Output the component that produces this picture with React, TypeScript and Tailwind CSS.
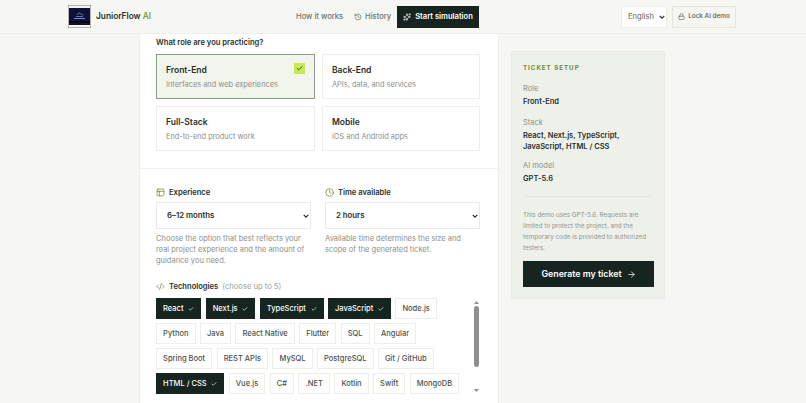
import React from 'react';
import { ArrowRight, Check, Clock, CodeXml, History, Lock, PanelsTopLeft, Sparkles } from 'lucide-react';

const roles = [
  { name: 'Front-End', desc: 'Interfaces and web experiences', selected: true },
  { name: 'Back-End', desc: 'APIs, data, and services' },
  { name: 'Full-Stack', desc: 'End-to-end product work' },
  { name: 'Mobile', desc: 'iOS and Android apps' },
];

const techRows = [
  [['React', 1], ['Next.js', 1], ['TypeScript', 1], ['JavaScript', 1], ['Node.js', 0]],
  [['Python', 0], ['Java', 0], ['React Native', 0], ['Flutter', 0], ['SQL', 0], ['Angular', 0]],
  [['Spring Boot', 0], ['REST APIs', 0], ['MySQL', 0], ['PostgreSQL', 0], ['Git / GitHub', 0]],
  [['HTML / CSS', 1], ['Vue.js', 0], ['C#', 0], ['.NET', 0], ['Kotlin', 0], ['Swift', 0], ['MongoDB', 0]],
] as [string, number][][];

const Logo = () => (
  <svg width="23" height="23" viewBox="0 0 23 23" className="shrink-0">
    <rect x="0.25" y="0.25" width="22.5" height="22.5" fill="#f4f4f0" stroke="#77796f" strokeWidth="0.5" />
    <rect x="1" y="3" width="21" height="17" fill="#0d1238" />
    <rect x="1" y="16" width="21" height="2" fill="#05070f" />
    <path d="M8 11.5h7M9 10c.5-2 3-2.5 4-1 1 0 2 .5 2 1.5" fill="none" stroke="#6f8de0" strokeWidth="0.8" />
    <rect x="6" y="13" width="11" height="1" fill="#8d7fe0" />
  </svg>
);

const Field = ({ label, className, children }: { label: string; className: string; children: React.ReactNode }) => (
  <div className={className}>
    <p className="text-[7.5px] leading-[13px] text-[#8b9189]">{label}</p>
    <div className="mt-[1px] text-[7.5px] leading-[11px] font-semibold text-[#27302b]">{children}</div>
  </div>
);

// native select with the arrow drawn by hand, the browser's one is too big at this size
const SelectBox = ({ value, className }: { value: string; className: string }) => (
  <div className="relative">
    <select className={`block w-full appearance-none border bg-white ${className}`}>
      <option>{value}</option>
    </select>
    <svg
      className="pointer-events-none absolute right-[2px] top-1/2 -translate-y-1/2"
      width="6"
      height="4"
      viewBox="0 0 6 4"
    >
      <path d="M.7.8 3 3.1 5.3.8" fill="none" stroke="#27302b" strokeWidth="1.2" />
    </svg>
  </div>
);

export default function App() {
  return (
    <div className="h-[403px] w-[806px] overflow-hidden bg-[#f6f7f2] font-['Inter',sans-serif] text-[#27302b]">
      <header className="flex h-[34px] items-center border-b border-[#edefe8] bg-[#f6f7f2] pl-[68px]">
        <Logo />
        <span className="ml-[5px] w-[54px] text-[8.3px] font-semibold whitespace-nowrap text-[#27302b]">
          JuniorFlow <span className="text-[#7f9a3c]">AI</span>
        </span>
        <span className="ml-[146px] w-[46px] text-[7.6px] font-medium whitespace-nowrap text-[#6d736c]">How it works</span>
        <History className="ml-[12px] size-[8px] text-[#6d736c]" />
        <span className="ml-[3px] w-[26px] text-[7.6px] font-medium text-[#6d736c]">History</span>
        <button className="ml-[6px] flex h-[22px] w-[82px] items-center justify-center gap-[4px] bg-[#16251f] text-[7.6px] font-semibold text-white">
          <Sparkles className="size-[8px]" />
          Start simulation
        </button>
        <div className="ml-[142px] w-[46px]">
          <SelectBox value="English" className="h-[22px] border-[#ecefe7] pl-[6px] text-[7.6px] text-[#5f665f]" />
        </div>
        <button className="ml-[5px] flex h-[22px] w-[64px] items-center justify-center gap-[3px] border border-[#e2e5dc] text-[6.4px] font-medium text-[#555c55]">
          <Lock className="size-[7px]" />
          Lock AI demo
        </button>
      </header>

      <main className="flex items-start pl-[139px]">
        <section className="h-[369px] w-[360px] shrink-0 border-x border-[#eceee7] bg-white">
          <div className="border-b border-[#eff1ea] px-[16px] pb-[17px] pt-[3px]">
            <h2 className="text-[7.6px] leading-[11px] font-semibold text-[#27302b]">What role are you practicing?</h2>
            <div className="mt-[6px] grid grid-cols-[159px_158px] gap-x-[7px] gap-y-[7px]">
              {roles.map(role => (
                <div
                  key={role.name}
                  className={`relative h-[45px] border px-[9px] pt-[9px] ${
                    role.selected ? 'border-[#8f9a8f] bg-[#f2f5ec]' : 'border-[#eceee7] bg-white'
                  }`}
                >
                  <p className="text-[8.5px] leading-[13px] font-semibold text-[#27302b]">{role.name}</p>
                  <p className="mt-[2px] text-[7.4px] leading-[11px] text-[#8a908a]">{role.desc}</p>
                  {role.selected && (
                    <span className="absolute right-[9px] top-[8px] flex size-[11px] items-center justify-center bg-[#c6e957]">
                      <Check className="size-[7px] text-[#27402a]" strokeWidth={3} />
                    </span>
                  )}
                </div>
              ))}
            </div>
          </div>

          <div className="px-[16px] pt-[18px]">
            <div className="grid grid-cols-[155px_155px] gap-x-[14px]">
              <div>
                <label className="mb-[4px] flex h-[11px] items-center gap-[4px] text-[7.6px] font-semibold">
                  <PanelsTopLeft className="size-[9px] text-[#6f8a3a]" />
                  Experience
                </label>
                <SelectBox value="6–12 months" className="h-[27px] border-[#e9ebe4] pl-[10px] text-[7.8px] font-semibold" />
                <p className="mt-[4px] text-[7.5px] leading-[11px] text-[#8a908a]">
                  Choose the option that best reflects your real project experience and the amount of guidance you need.
                </p>
              </div>
              <div>
                <label className="mb-[4px] flex h-[11px] items-center gap-[4px] text-[7.6px] font-semibold">
                  <Clock className="size-[9px] text-[#6f8a3a]" />
                  Time available
                </label>
                <SelectBox value="2 hours" className="h-[27px] border-[#e9ebe4] pl-[10px] text-[7.8px] font-semibold" />
                <p className="mt-[4px] text-[7.5px] leading-[11px] text-[#8a908a]">
                  Available time determines the size and scope of the generated ticket.
                </p>
              </div>
            </div>

            <div className="mt-[15px] flex h-[11px] items-center text-[7.6px] font-semibold">
              <CodeXml className="size-[9px] text-[#6f8a3a]" />
              <span className="ml-[4px]">Technologies</span>
              <span className="ml-[4px] font-normal text-[#9aa09a]">(choose up to 5)</span>
            </div>

            <div className="mt-[6px] flex">
              <div className="flex w-[317px] flex-col gap-[4px]">
                {techRows.map((row, i) => (
                  <div key={i} className="flex gap-[4.3px]">
                    {row.map(([name, on]) => (
                      <span
                        key={name}
                        className={`flex h-[21px] items-center gap-[4.7px] border px-[6.1px] text-[7.5px] font-medium whitespace-nowrap ${
                          on ? 'border-[#16251f] bg-[#16251f] text-white' : 'border-[#eceee7] bg-white text-[#4c534d]'
                        }`}
                      >
                        {name}
                        {on ? <Check className="size-[6px]" strokeWidth={2.5} /> : null}
                      </span>
                    ))}
                  </div>
                ))}
              </div>
              <div className="flex h-[94px] w-[7px] flex-col items-center pt-[3px]">
                <svg width="5" height="3" viewBox="0 0 5 3"><path d="M2.5 0 5 3H0z" fill="#8f8f8f" /></svg>
                <div className="mt-[2px] h-[61px] w-[5px] rounded-full bg-[#8f8f8f]" />
                <svg className="mt-auto" width="5" height="3" viewBox="0 0 5 3"><path d="M2.5 3 5 0H0z" fill="#8f8f8f" /></svg>
              </div>
            </div>
          </div>
        </section>

        <aside className="ml-[12px] mt-[17px] h-[248px] w-[154px] border border-[#e8ebe3] bg-[#eef0ea] px-[11px] pt-[12px]">
          <h3 className="text-[6.2px] leading-[8px] font-bold tracking-[0.16em] text-[#71873b]">TICKET SETUP</h3>
          <div className="mt-[10px]">
            <Field label="Role" className="mb-[9px]">Front-End</Field>
            <Field label="Stack" className="mb-[7px]">React, Next.js, TypeScript, JavaScript, HTML / CSS</Field>
            <Field label="AI model" className="mb-[12px]">GPT-5.6</Field>
          </div>
          <div className="border-t border-[#e4e7de] pt-[13px] text-[6.3px] leading-[11px] text-[#90968f]">
            This demo uses GPT-5.6. Requests are limited to protect the project, and the temporary code is provided to authorized testers.
          </div>
          <button className="mt-[7px] flex h-[26px] w-[131px] items-center justify-center gap-[5px] bg-[#16251f] text-[8.8px] font-semibold text-white">
            Generate my ticket
            <ArrowRight className="size-[9px]" />
          </button>
        </aside>
      </main>
    </div>
  );
}
